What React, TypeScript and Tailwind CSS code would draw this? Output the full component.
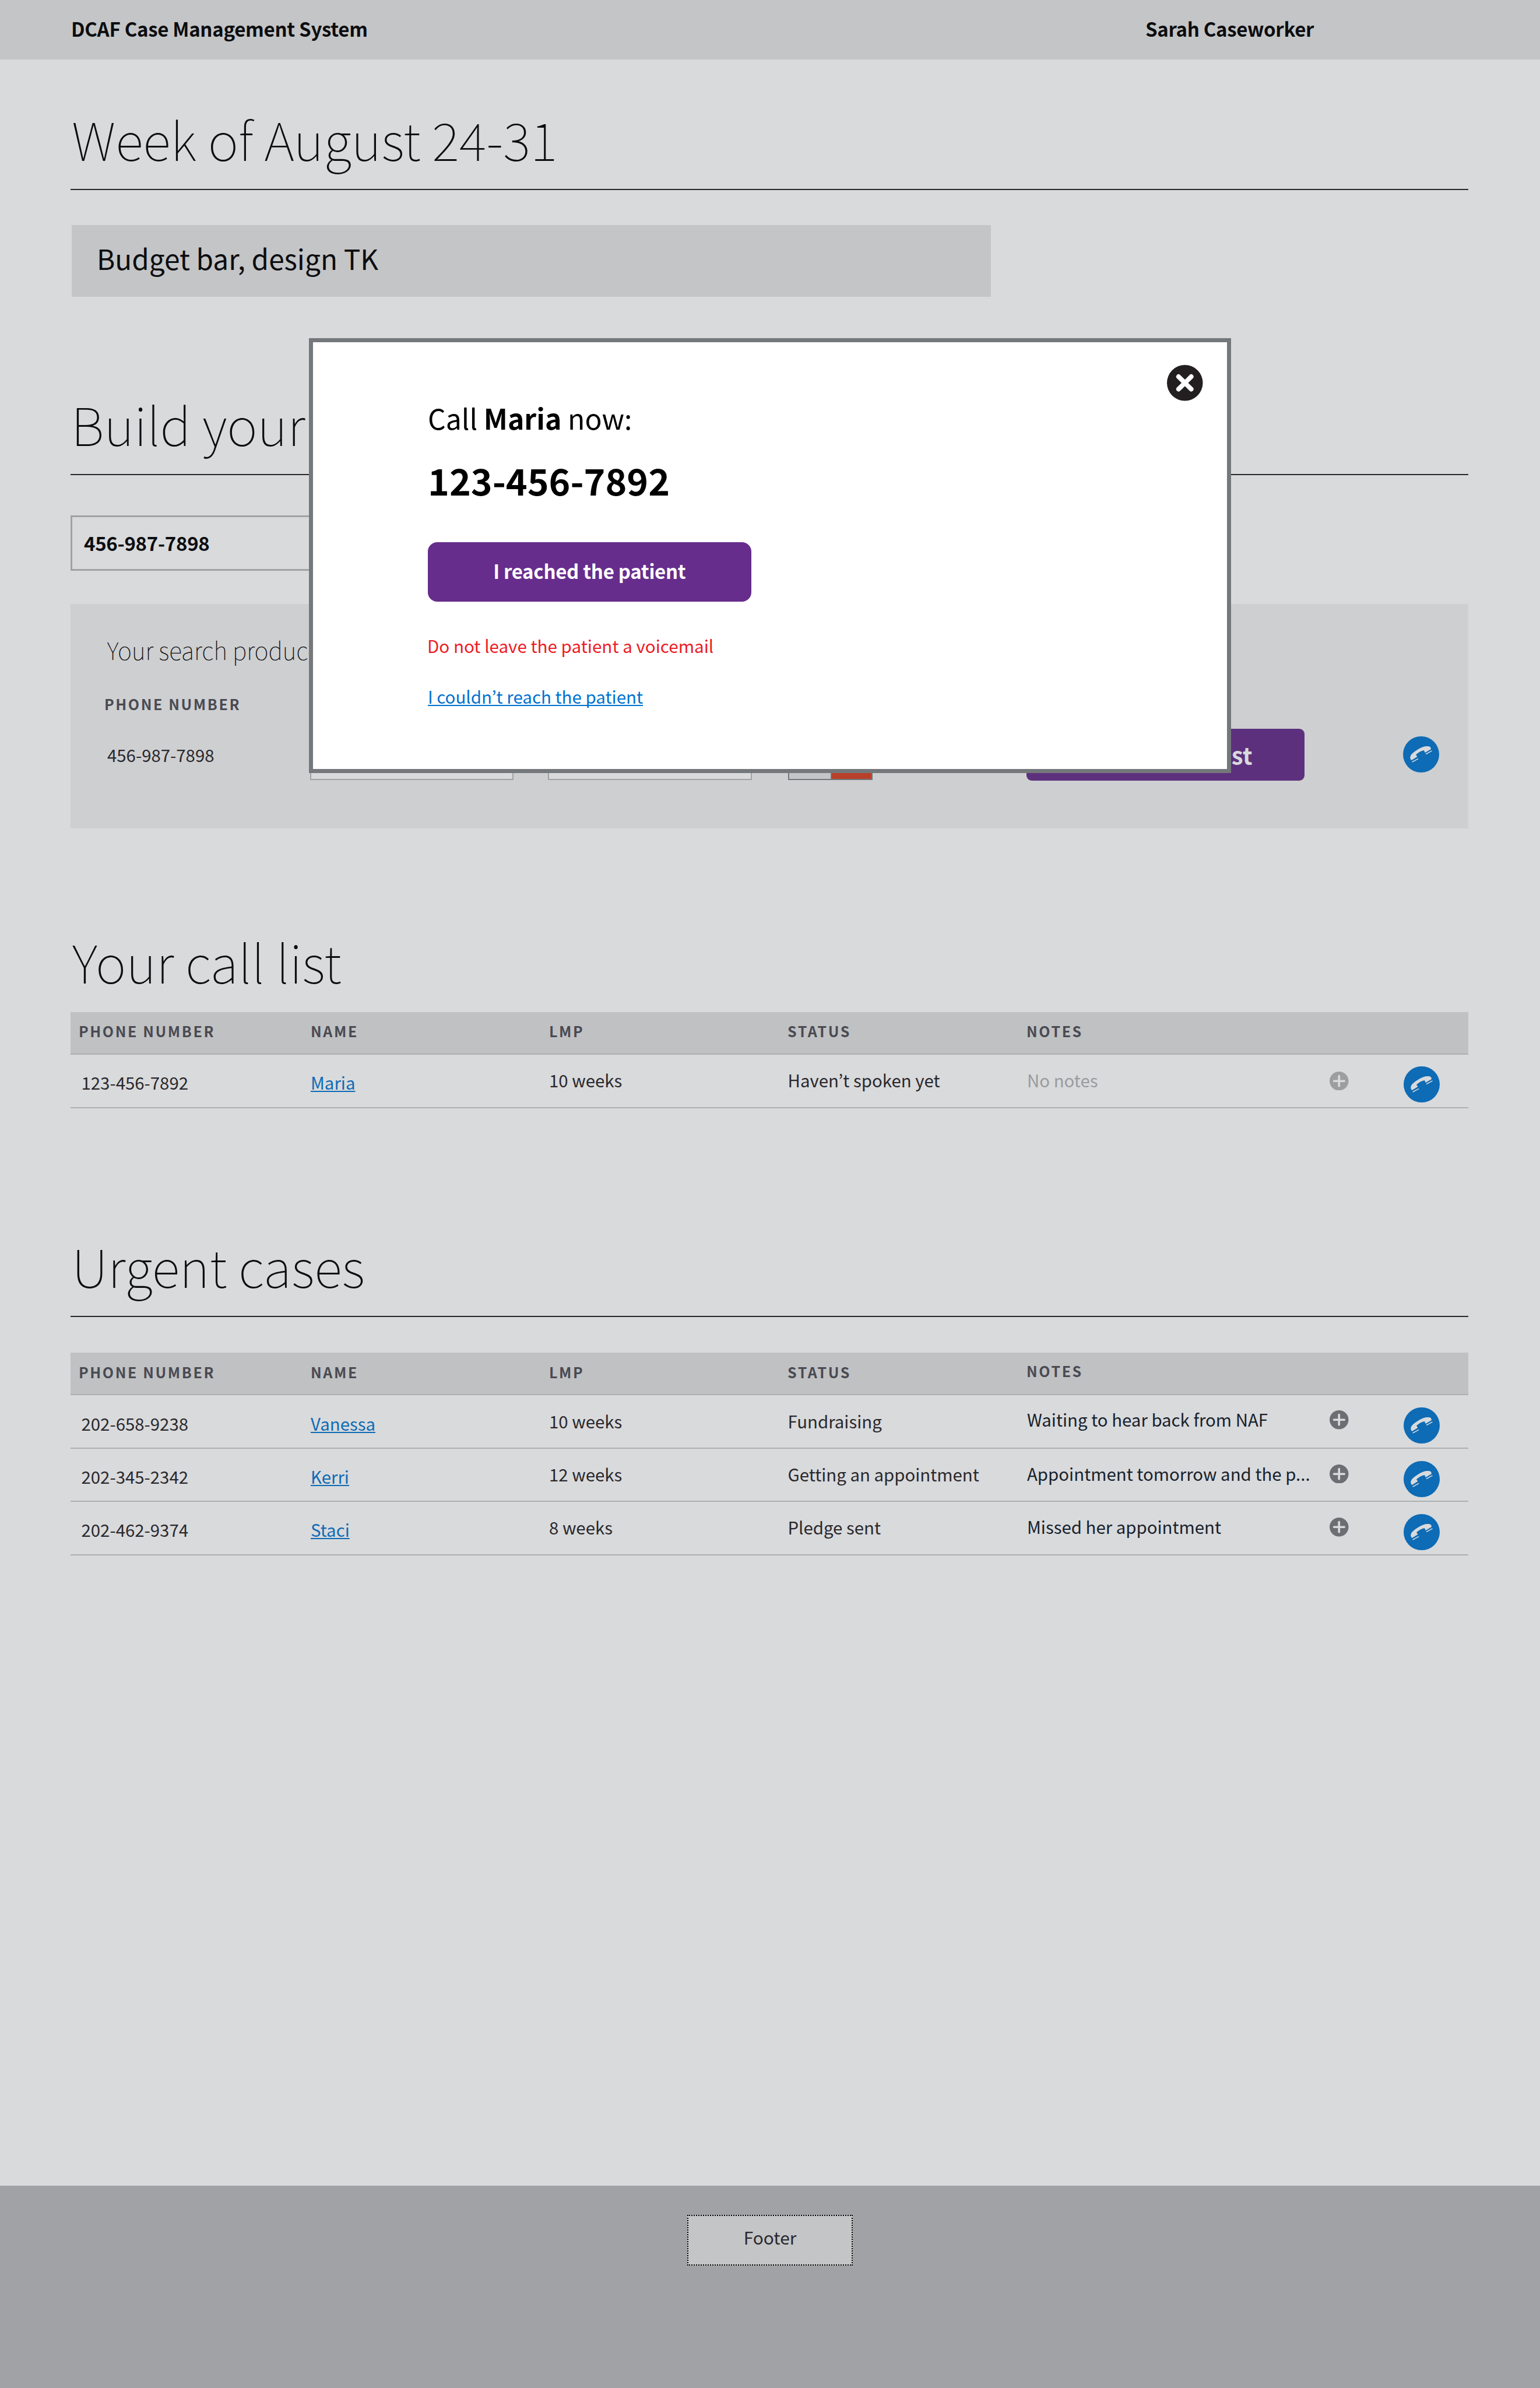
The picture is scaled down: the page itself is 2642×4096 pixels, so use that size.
import type { ReactNode } from "react";

const COLS =
  "grid grid-cols-[411px_409px_410px_410px_520px_127px_1fr] items-center";

function PhoneButton() {
  return (
    <button className="block size-[62px]" aria-label="Call patient">
      <svg viewBox="0 0 63 63" className="block size-full">
        <circle cx="31.5" cy="31.5" r="31.5" fill="#0e6bb5" />
        <path
          d="M14.8 41.6C12.9 40.2 12.2 38 12.6 35.8C13.2 32.2 17 28.4 23.5 24.3C29.5 20.5 35 18.1 39.8 17.4C43.5 16.9 46.8 17.2 47.9 19.2C48.6 20.5 48.9 21.6 48.4 22.6L38.3 28.4C37.7 27 37.4 25.6 36.4 24.3C31.5 25.3 26.8 27.8 22.5 31.8C22.8 33.2 24.4 34 24.6 35.6Z"
          fill="#d9dadc"
        />
        <path
          d="M39.7 31L50.3 25.3M15.9 44.7L26.6 38.9"
          stroke="#d9dadc"
          strokeWidth="1.5"
        />
      </svg>
    </button>
  );
}

function AddNote({ muted }: { muted?: boolean }) {
  return (
    <svg viewBox="0 0 33 33" className="block size-[32.5px]">
      <circle cx="16.5" cy="16.5" r="16.5" fill={muted ? "#9c9ea0" : "#6b6e72"} />
      <path
        d="M7.7 16.5H25.6M16.5 7.7V25.2"
        stroke="#d9dadc"
        strokeWidth="3.7"
        strokeLinecap="round"
      />
    </svg>
  );
}

function Th({ children, className = "" }: { children: ReactNode; className?: string }) {
  return (
    <div
      className={`text-[25px] leading-[40px] font-bold tracking-[2.6px] text-[#494a52] ${className}`}
    >
      {children}
    </div>
  );
}

function TableHead({ notesClass = "" }: { notesClass?: string }) {
  return (
    <div
      className={`${COLS} h-[73.4px] border-b-2 border-[#adafb1] bg-[#c0c1c3] pb-[6px]`}
    >
      <Th className="pl-[14px]">PHONE NUMBER</Th>
      <Th className="pl-px">NAME</Th>
      <Th className="pl-px">LMP</Th>
      <Th>STATUS</Th>
      <Th className={notesClass}>NOTES</Th>
    </div>
  );
}

type Case = {
  phone: string;
  name: string;
  lmp: string;
  status: string;
  notes: string;
  notesClass: string;
  plusClass: string;
  callClass: string;
  muted?: boolean;
};

function Row({ c }: { c: Case }) {
  return (
    <div className={`${COLS} h-[91.4px] border-b-2 border-[#adafb1] text-[29.4px] leading-[44px] text-[#29282c]`}>
      <div className="pt-[5px] pl-[18.5px]">{c.phone}</div>
      <div className="pt-[5px] pl-px">
        <a className="text-[#0e6bb5] underline decoration-[2px] underline-offset-[2px] [text-decoration-skip-ink:none]">
          {c.name}
        </a>
      </div>
      <div className="pb-[3px] pl-px">{c.lmp}</div>
      <div className="pb-[3px] pl-[0.5px]">{c.status}</div>
      <div className={c.notesClass}>{c.notes}</div>
      <div className={c.plusClass}>
        <AddNote muted={c.muted} />
      </div>
      <div className={c.callClass}>
        <PhoneButton />
      </div>
    </div>
  );
}

const callList: Case[] = [
  {
    phone: "123-456-7892",
    name: "Maria",
    lmp: "10 weeks",
    status: "Haven’t spoken yet",
    notes: "No notes",
    notesClass: "pb-[3px] pl-px text-[#9a9b9e]",
    plusClass: "pb-0",
    callClass: "pt-[12px]",
    muted: true,
  },
];

const urgent: Case[] = [
  {
    phone: "202-658-9238",
    name: "Vanessa",
    lmp: "10 weeks",
    status: "Fundraising",
    notes: "Waiting to hear back from NAF",
    notesClass: "pb-[9px] pl-px text-[#17212b]",
    plusClass: "pb-[5px]",
    callClass: "pt-[13px]",
  },
  {
    phone: "202-345-2342",
    name: "Kerri",
    lmp: "12 weeks",
    status: "Getting an appointment",
    notes: "Appointment tomorrow and the p...",
    notesClass: "pb-[5px] pl-px text-[#17212b]",
    plusClass: "pb-[3px]",
    callClass: "pt-[15px]",
  },
  {
    phone: "202-462-9374",
    name: "Staci",
    lmp: "8 weeks",
    status: "Pledge sent",
    notes: "Missed her appointment",
    notesClass: "pb-[5px] pl-px text-[#17212b]",
    plusClass: "pb-[3px]",
    callClass: "pt-[15px]",
  },
];

function Title({ children, className = "" }: { children: ReactNode; className?: string }) {
  return (
    <h2 className={`text-[89.35px] leading-[120px] font-thin text-[#0c0d0f] ${className}`}>
      {children}
    </h2>
  );
}

const RULE = "border-b-2 border-[#2a272a] pb-[27px]";

function CallModal() {
  return (
    <div className="absolute top-[580px] left-[530px] h-[746px] w-[1582px] border-[7px] border-[#75787b] bg-white pt-[94px] pl-[197px] text-black">
      <button className="absolute top-[39px] right-[41.5px] size-[61.5px]" aria-label="Close">
        <svg viewBox="0 0 63 63" className="block size-full">
          <circle cx="31.5" cy="31.5" r="31.5" fill="#231f20" />
          <path
            d="M20.4 20.6L42.6 42.4M42.6 20.6L20.4 42.4"
            stroke="#fff"
            strokeWidth="8.2"
            strokeLinecap="round"
          />
        </svg>
      </button>
      <p className="text-[48.1px] leading-[70px]">
        Call <b className="font-bold">Maria</b> now:
      </p>
      <p className="mt-[27px] text-[62.5px] leading-[90px] font-bold">123-456-7892</p>
      <button className="mt-[61.5px] flex h-[102.5px] w-[554.7px] items-center justify-center rounded-[16px] bg-[#662d8c] pb-[4px] text-[33px] leading-[50px] font-bold tracking-[-0.3px] text-white">
        I reached the patient
      </button>
      <p className="mt-[54px] -ml-px text-[29.6px] leading-[44px] text-[#ed1c24]">
        Do not leave the patient a voicemail
      </p>
      <p className="mt-[42px] text-[29.5px] leading-[44px]">
        <a className="text-[#0071ce] underline decoration-[2px] underline-offset-[2px] [text-decoration-skip-ink:none]">
          I couldn’t reach the patient
        </a>
      </p>
    </div>
  );
}

export default function App() {
  return (
    <div className="relative flex h-[4096px] w-[2642px] flex-col overflow-hidden bg-[#d9dadc] font-['Noto_Sans_CJK_KR','Noto_Sans_CJK_SC',sans-serif]">
      <header className="flex h-[102px] shrink-0 items-center bg-[#c4c5c7] pb-[4px] pl-[122px] text-[33px] leading-[50px] font-bold tracking-[-0.3px] text-[#0c0d0f]">
        <div className="w-[1843px]">DCAF Case Management System</div>
        <div>Sarah Caseworker</div>
      </header>

      <main className="ml-[121px] w-[2398px]">
        <Title className={`mt-[75px] pl-[2px] ${RULE}`}>Week of August 24-31</Title>
        <div className="mt-[60px] ml-[2px] flex h-[123px] w-[1576.5px] items-center bg-[#c4c5c7] pb-[9px] pl-[43px] text-[47.7px] leading-[70px] text-[#0c0d0f]">
          Budget bar, design TK
        </div>

        <Title className={`mt-[157px] pl-px ${RULE}`}>Build your call list</Title>
        <div className="mt-[69px] flex h-[95px] w-[1180px] items-center border-[3px] border-[#a0a2a4] pb-[2px] pl-[20px] text-[33px] leading-[50px] font-bold tracking-[-0.3px] text-[#0c0d0f]">
          456-987-7898
        </div>

        <section className="mt-[57px] h-[385px] bg-[#cecfd1] pt-[48.5px]">
          <h3 className="pl-[62.7px] text-[40.85px] leading-[60px] font-thin text-[#0c0d0f]">
            Your search produced
          </h3>
          <div className="mt-[42px] pl-[58px]">
            <Th>PHONE NUMBER</Th>
          </div>
          <div className={`${COLS} mt-[23.5px] h-[88.5px]`}>
            <div className="pl-[63px] text-[29.4px] leading-[44px] text-[#29282c]">
              456-987-7898
            </div>
            <div className="h-[87px] w-[349px] border-2 border-[#a0a2a4] bg-[#d9dadc]" />
            <div className="-ml-px h-[87px] w-[350px] border-2 border-[#a0a2a4] bg-[#d9dadc]" />
            <div className="ml-px flex h-[87px] w-[145px] border-2 border-[#75777a] bg-[#c4c5c7]">
              <div className="flex-1" />
              <div className="w-[70px] border-l-2 border-[#75777a] bg-[#b9402a]" />
            </div>
            <button className="flex h-[88.5px] w-[476.5px] items-center justify-end rounded-[9px] bg-[#5d307d] pr-[89px] text-[40px] leading-[60px] font-bold whitespace-nowrap text-[#d9dadc]">
              Add to call list
            </button>
            <div />
            <div className="-ml-px">
              <PhoneButton />
            </div>
          </div>
        </section>

        <Title className="mt-[166.5px] pl-[3px]">Your call list</Title>
        <div className="mt-[28.3px]">
          <TableHead />
          {callList.map((c) => (
            <Row key={c.phone} c={c} />
          ))}
        </div>

        <Title className={`mt-[209.5px] pl-[2px] ${RULE}`}>Urgent cases</Title>
        <div className="mt-[61px]">
          <TableHead notesClass="pb-[4px]" />
          {urgent.map((c) => (
            <Row key={c.phone} c={c} />
          ))}
        </div>
      </main>

      <footer className="mt-auto flex h-[347px] shrink-0 justify-center bg-[#a1a2a5] pt-[50px]">
        <div className="flex h-[87px] w-[284px] items-center justify-center border-2 border-dotted border-black bg-[#c4c5c7] pb-[12px] text-[29.8px] leading-[44px] text-[#29282c]">
          Footer
        </div>
      </footer>

      <CallModal />
    </div>
  );
}
